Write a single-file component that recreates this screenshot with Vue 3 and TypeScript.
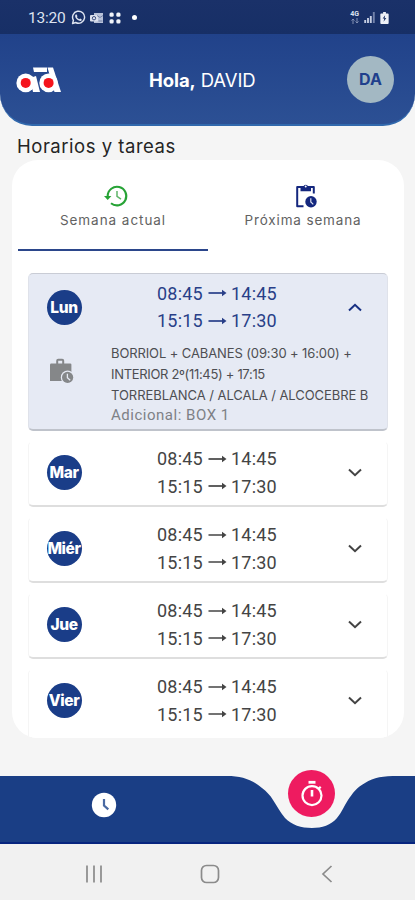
<script setup lang="ts">
import { ref } from 'vue'

interface Day {
  name: string
  shifts: [string, string][]
  tasks: string[]
  extra?: string
}

const shifts: [string, string][] = [
  ['08:45', '14:45'],
  ['15:15', '17:30'],
]

const days: Day[] = [
  {
    name: 'Lun',
    shifts,
    tasks: ['BORRIOL + CABANES (09:30 + 16:00) +', 'INTERIOR 2º(11:45) + 17:15', 'TORREBLANCA / ALCALA / ALCOCEBRE B'],
    extra: 'Adicional: BOX 1',
  },
  { name: 'Mar', shifts, tasks: [] },
  { name: 'Miér', shifts, tasks: [] },
  { name: 'Jue', shifts, tasks: [] },
  { name: 'Vier', shifts, tasks: [] },
]

const open = ref<number>(0)
const week = ref<number>(0)
const toggle = (i: number) => {
  open.value = open.value === i ? -1 : i
}
</script>

<template>
  <div class="screen">
    <div class="status">
      <span class="clock">13:20</span>
      <svg class="whatsapp" width="15" height="15" viewBox="0 0 24 24">
        <path d="M2.5 21.5l1.4-5A9.6 9.6 0 1 1 7.6 20z" fill="none" stroke="currentColor" stroke-width="2.3" stroke-linejoin="round" />
        <path d="M8.6 6.8l1.8 3-1 1.4c.9 1.8 2 2.8 3.8 3.6l1.4-1.3 2.7 1.5c-.3 2-2 2.8-3.9 2.3-3.6-1-6.3-4-6.8-7.2-.2-1.6.7-3 2-3.300z" fill="currentColor" />
      </svg>
      <svg class="mail" width="14" height="12" viewBox="0 0 14 12">
        <path d="M4 1h9v10H4z" fill="#b8c2da" />
        <rect x="0" y="3" width="8" height="6.500" rx="1" fill="#dce1ee" />
        <circle cx="4" cy="6.200" r="1.700" fill="none" stroke="#3c4e80" />
        <path d="M7 3.500l3 2 3-2M8.500 9h4" fill="none" stroke="#7482a8" />
      </svg>
      <svg class="dots" width="12" height="12" viewBox="0 0 12 12" fill="currentColor">
        <rect x="0.500" y="0.500" width="4.200" height="4.200" rx="1.500" /><rect x="7.300" y="0.500" width="4.200" height="4.200" rx="1.500" />
        <rect x="0.500" y="7.300" width="4.200" height="4.200" rx="1.500" /><rect x="7.300" y="7.300" width="4.200" height="4.200" rx="1.500" />
      </svg>
      <i class="dot"></i>
      <div class="signals">
        <span class="net"><b>4G</b><svg width="8" height="6" viewBox="0 0 8 6"><path d="M2 6V1M.5 2.500L2 1l1.500 1.500M6 0v5M4.500 3.500L6 5l1.500-1.500" fill="none" stroke="#8290b4" /></svg></span>
        <svg width="11" height="11" viewBox="0 0 11 11"><path d="M1.200 8v3M4 6v5M6.800 4v7" stroke="#c6cee2" stroke-width="1.900" /><path d="M9.800 0v11" stroke="#7282aa" stroke-width="1.900" /></svg>
        <svg class="battery" width="9" height="12" viewBox="0 0 9 13"><path d="M3 0h3v1.500h2q1 0 1 1V12q0 1-1 1H1q-1 0-1-1V2.500q0-1 1-1h2z" fill="#eef1f8" /><path d="M5.200 3.500L2.500 7h1.800l-.8 3.500L6.500 6.500H4.700z" fill="#1a2f62" /></svg>
      </div>
    </div>

    <header class="header">
      <svg class="logo" width="46" height="28" viewBox="0 0 46 28">
        <path d="M17 1.500h14v4.500h-13z" fill="#fff" />
        <path d="M31.500 1.500h5.500l8 24.500h-6.500z" fill="#fff" />
        <path d="M14 12l6-2 4 16h-7z" fill="#fff" />
        <circle cx="9.700" cy="16.900" r="9.300" fill="#fff" />
        <circle cx="32.600" cy="16.900" r="9.300" fill="#fff" />
        <circle cx="9.700" cy="16.900" r="5" fill="#f5141c" />
        <circle cx="32.600" cy="16.900" r="5" fill="#f5141c" />
      </svg>
      <div class="greeting"><b>Hola,</b> <span>DAVID</span></div>
      <div class="avatar">DA</div>
    </header>

    <main class="main">
      <h1 class="title">Horarios y tareas</h1>
      <section class="card">
        <nav class="tabs">
          <button class="tab" :class="{ active: week === 0 }" @click="week = 0">
            <svg width="26" height="24" viewBox="0 0 26 24">
              <path d="M4.700 12A9.300 9.300 0 1 1 8 19.200" fill="none" stroke="#27a336" stroke-width="2.100" />
              <path d="M1 12h7.400l-3.700 4z" fill="#27a336" />
              <path d="M14 7v5.400l4 2.800" fill="none" stroke="#5fb569" stroke-width="1.500" />
            </svg>
            <span class="tab-now">Semana actual</span>
          </button>
          <button class="tab" :class="{ active: week === 1 }" @click="week = 1">
            <svg width="24" height="26" viewBox="0 0 24 26">
              <path d="M9.500 23.200H3.200V4h16.600v6.500" fill="none" stroke="#14277e" stroke-width="2" stroke-linejoin="round" />
              <path d="M6.500 3.500h2.800a2.600 2.600 0 0 1 4.900 0h2.800v4.700H6.500z" fill="#14277e" />
              <circle cx="11.700" cy="3.400" r="1" fill="#fff" />
              <circle cx="17" cy="18.700" r="5.700" fill="#14277e" />
              <path d="M16.800 15.200v3.800l2.500 2.400" fill="none" stroke="#dfe4f2" stroke-width="1.200" />
            </svg>
            <span class="tab-next">Próxima semana</span>
          </button>
        </nav>

        <div class="list">
          <article v-for="(d, i) in days" :key="d.name" class="day" :class="{ open: open === i }">
            <div class="row" @click="toggle(i)">
              <div class="badge"><span>{{ d.name }}</span></div>
              <div class="shifts">
                <div v-for="s in d.shifts" :key="s[0]" class="shift">
                  <span>{{ s[0] }}</span>
                  <svg width="19" height="10" viewBox="0 0 19 10"><path d="M.5 5H16" stroke="currentColor" stroke-width="1.700" /><path d="M14 1.800L18.500 5 14 8.200z" fill="currentColor" /></svg>
                  <span>{{ s[1] }}</span>
                </div>
              </div>
              <svg class="chevron" width="14" height="9" viewBox="0 0 14 9"><path d="M1 1.500L7 7.200l6-5.700" fill="none" stroke="currentColor" stroke-width="2" /></svg>
            </div>
            <div v-if="open === i" class="detail">
              <svg class="case" width="25" height="26" viewBox="0 0 25 26">
                <path d="M8.200 6V2.800q0-1 1-1h4q1 0 1 1V6" fill="none" stroke="#858789" stroke-width="2" />
                <path d="M2.200 5.500h19q1.200 0 1.200 1.200v16.300H1V6.700q0-1.200 1.200-1.200z" fill="#858789" />
                <circle cx="18.600" cy="19.400" r="6.800" fill="#e6eaf4" />
                <circle cx="18.600" cy="19.400" r="5.600" fill="#858789" />
                <path d="M18.400 15.700v4l2.800 2.500" fill="none" stroke="#e6eaf4" stroke-width="1.300" />
              </svg>
              <div class="tasks">
                <div v-for="(t, k) in d.tasks" :key="k" class="task" :class="'line' + k">{{ t }}</div>
                <div class="extra">{{ d.extra }}</div>
              </div>
            </div>
          </article>
        </div>
      </section>
    </main>

    <footer class="bar">
      <svg class="wave" width="415" height="74" viewBox="0 0 415 74">
        <path d="M0 6H227C242 6 253 10 262 18C267 22 270 25 273 30C277 36 280 42 285 48C292 55 301 58 312 58C322 58 331 55 337 48C342 42 344 36 348 30C352 24 357 17 365 13C374 7 383 6 398 6H415V74H0z" fill="#1a3e85" />
        <path d="M0 73H415" stroke="#07257f" stroke-width="2" />
      </svg>
      <svg class="time" width="26" height="26" viewBox="0 0 26 26">
        <circle cx="13" cy="13" r="12.200" fill="#fff" />
        <path d="M13 7v6.500l4.300 3.900" fill="none" stroke="#4969a2" stroke-width="2.200" />
      </svg>
      <button class="fab">
        <svg width="24" height="27" viewBox="0 0 24 27" fill="none" stroke="#fff" stroke-width="2.200">
          <circle cx="12" cy="15.600" r="9.500" /><path d="M8.500 2.300h7" stroke-width="2.800" /><path d="M12 10v6.500" stroke-width="2.600" /><path d="M18.500 9l2.200-2.200" />
        </svg>
      </button>
    </footer>
    <div class="system">
      <svg width="18" height="18" viewBox="0 0 18 18"><path d="M2 .5v17M9 .5v17M16 .5v17" stroke="#8b8b8b" stroke-width="1.700" /></svg>
      <svg width="20" height="20" viewBox="0 0 20 20"><rect x="1.500" y="1.500" width="17" height="17" rx="5" fill="none" stroke="#8b8b8b" stroke-width="1.700" /></svg>
      <svg width="12" height="18" viewBox="0 0 12 18"><path d="M10.500 1L2 9l8.500 8" fill="none" stroke="#8b8b8b" stroke-width="1.700" /></svg>
    </div>
  </div>
</template>

<style>
body { margin: 0; }
</style>

<style scoped>
* { box-sizing: border-box; }
svg { display: block; flex: none; }
button { border: 0; padding: 0; background: none; font: inherit; color: inherit; }
.screen { width: 415px; height: 900px; overflow: hidden; display: flex; flex-direction: column; background: #f5f5f5; font-family: Inter, "Noto Sans", sans-serif; }
.status { height: 34px; flex: none; display: flex; align-items: center; padding: 1px 26px 0 28px; background: linear-gradient(#1a3169, #172f66); color: #dde3f0; }
.clock { width: 38px; font: 15.500px Roboto, sans-serif; letter-spacing: -0.200px; white-space: nowrap; }
.whatsapp { margin-left: 5px; }
.mail { margin-left: 4px; }
.dots { margin-left: 5px; color: #f0f3fa; }
.dot { width: 5px; height: 5px; margin-left: 11px; border-radius: 50%; background: #fff; }
.signals { margin-left: auto; display: flex; align-items: center; gap: 5px; }
.net { display: flex; flex-direction: column; align-items: center; }
.net b { font: bold 7px/7px Roboto, sans-serif; }
.header { height: 92px; flex: none; display: flex; align-items: center; padding: 1px 22px 0 16px; border-radius: 0 0 32px 32px; background: linear-gradient(#21428a, #2c5094); border-bottom: 2px solid #3169ad; color: #fff; }
.logo { margin-top: 0; }
.greeting { width: 110px; margin-left: 87px; font-size: 18.500px; letter-spacing: -0.100px; white-space: nowrap; }
.greeting b { font-weight: 700; }
.greeting span { font-weight: 400; }
.avatar { width: 47px; height: 47px; margin: -1px -1px 0 auto; border-radius: 50%; background: #a3b8c3; color: #203f8c; font-size: 16px; font-weight: 700; display: flex; align-items: center; justify-content: center; }
.main { height: 644px; flex: none; padding: 8px 11px 0 12px; }
.title { margin: 0 0 0 5px; height: 26px; font-size: 18.500px; line-height: 24px; font-weight: 400; color: #242424; letter-spacing: 0.520px; white-space: nowrap; }
.card { height: 578px; overflow: hidden; border-radius: 26px; background: #fff; }
.tabs { height: 91px; display: flex; padding: 0 5px 0 6px; }
.tab { width: 190px; display: flex; flex-direction: column; align-items: center; padding-top: 23px; border-bottom: 2.500px solid transparent; font-size: 13.500px; line-height: 18px; letter-spacing: 0.950px; color: #626262; white-space: nowrap; }
.tab svg { height: 26px; margin-left: 6px; }
.tab span { margin-top: 2px; }
.tab.active { border-bottom-color: #2b468b; }
.tab-next { letter-spacing: 0.850px; }
.list { display: flex; flex-direction: column; gap: 10px; padding: 22px 16px 0; }
.day { flex: none; height: 66px; border-radius: 5px; background: #fff; border: 1px solid #f5f5f5; border-top-color: #fff; border-bottom: 2px solid #dedede; color: #444; }
.day.open { height: 158px; background: #e6eaf4; border-color: #dfe2ea; border-top-color: #c9ccd5; border-bottom-color: #bfc3cb; color: #293f88; }
.day:last-child { height: 74px; }
.row { height: 60px; display: flex; align-items: center; padding: 1px 25px 0 17.500px; }
.open .row { height: 66px; padding-top: 0; }
.badge { width: 35px; height: 35px; flex: none; border-radius: 50%; background: #1a3d88; color: #fff; display: flex; align-items: center; justify-content: center; font-size: 15.500px; font-weight: 800; letter-spacing: -0.400px; }
.badge span { flex: none; }
.shifts { margin-left: 75.500px; }
.shift { height: 27.500px; width: 122px; display: flex; align-items: center; gap: 4px; font: 18px Roboto, sans-serif; letter-spacing: 0.200px; }
.shift span { width: 47px; }
.chevron { margin-left: auto; }
.open .chevron { transform: rotate(180deg); color: #173083; }
.detail { display: flex; padding: 3px 0 0 20px; }
.case { margin-top: 15px; }
.tasks { margin-left: 37px; white-space: nowrap; }
.task { height: 21px; line-height: 21px; font-size: 13px; color: #4d4e52; }
.line0 { letter-spacing: -0.110px; }
.line1 { letter-spacing: -0.320px; }
.line2 { letter-spacing: -0.060px; }
.extra { font: 15px/18px Roboto, sans-serif; color: #7e8186; letter-spacing: 0.520px; }
.bar { height: 74px; flex: none; position: relative; }
.time { position: absolute; left: 91px; top: 22px; }
.fab { position: absolute; left: 288px; top: 0; width: 47px; height: 47px; border-radius: 50%; background: #ee1b60; display: flex; align-items: center; justify-content: center; }
.system { height: 56px; flex: none; display: flex; align-items: center; padding: 3px 0 0 85px; background: #f1f1f1; }
.system svg + svg { margin-left: 97px; }
.system svg:last-child { margin-left: 101px; }
</style>
